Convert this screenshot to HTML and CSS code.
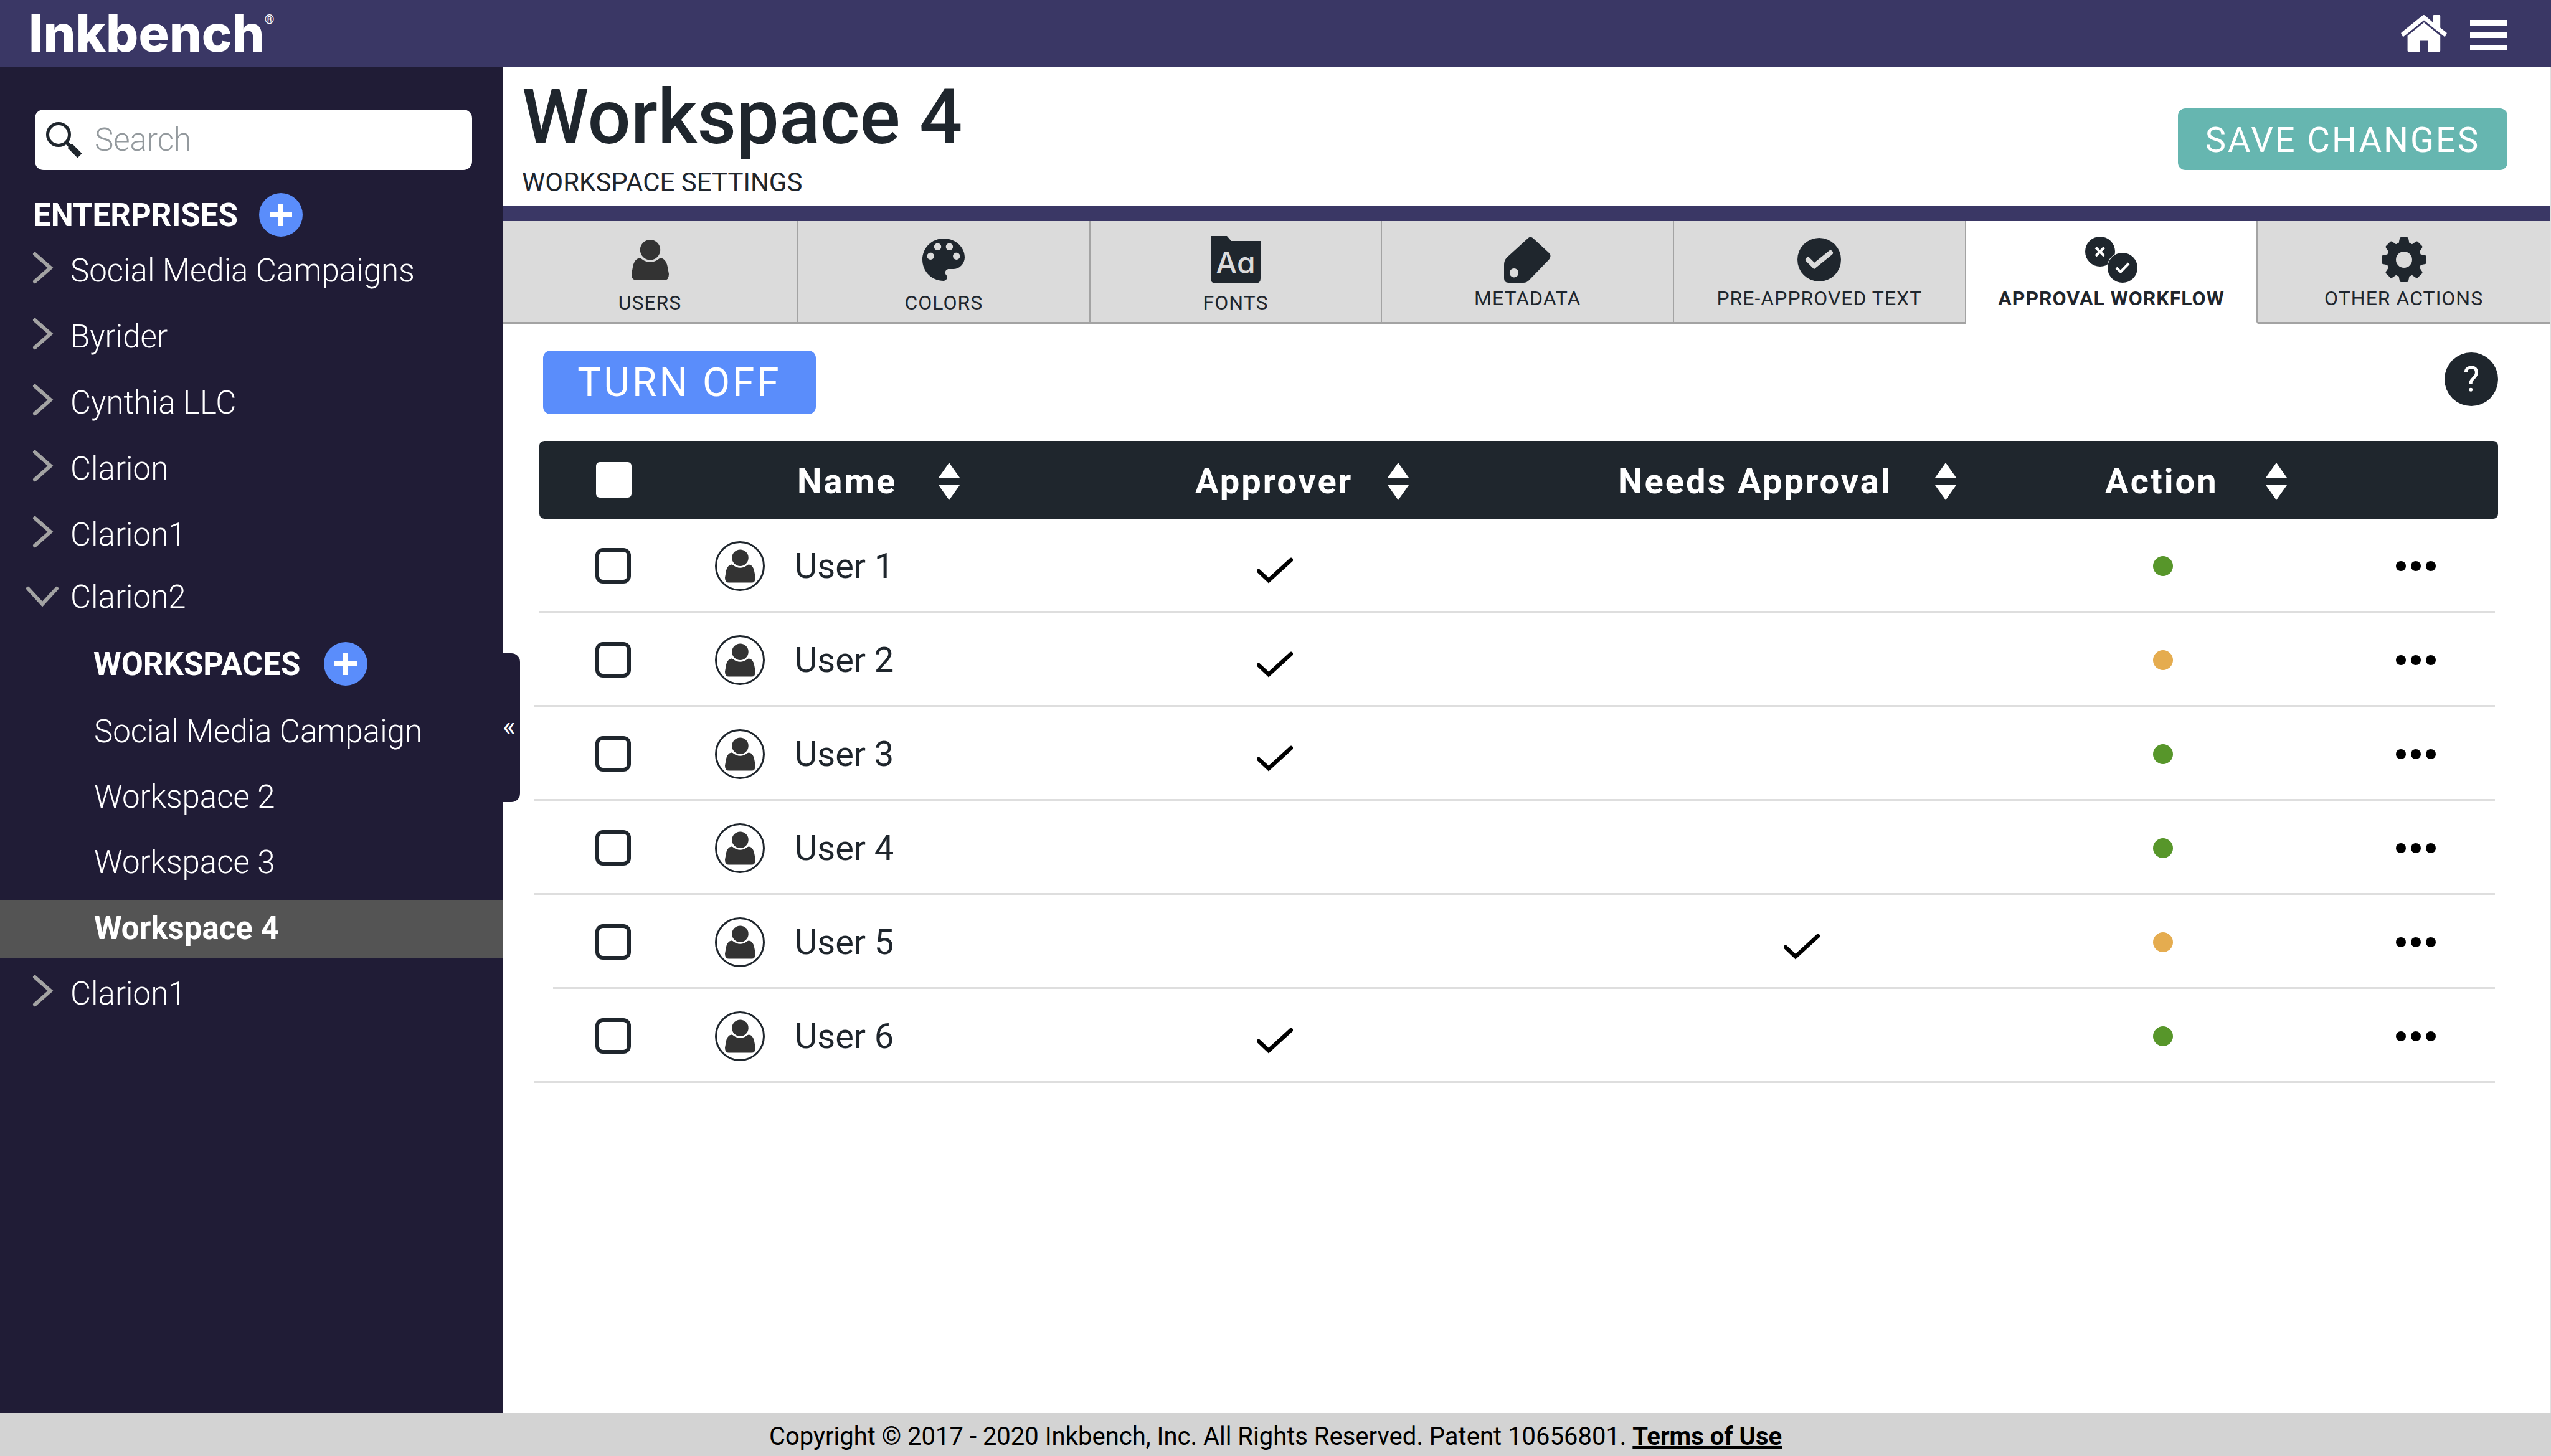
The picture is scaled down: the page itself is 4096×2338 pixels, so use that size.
FILE: index.html
```html
<!DOCTYPE html>
<html lang="en">
<head>
<meta charset="utf-8">
<title>Inkbench - Workspace Settings</title>
<link rel="stylesheet" href="styles.css">
</head>
<body>
<svg class="sprite" aria-hidden="true">
  <symbol id="i-right" viewBox="0 0 52 60"><path d="M14 4 39 26 14 48" fill="none" stroke="#a3a3a3" stroke-width="6" stroke-linecap="round"/></symbol>
  <symbol id="i-down" viewBox="0 0 52 60"><path d="M3 17 26 42 49 17" fill="none" stroke="#a3a3a3" stroke-width="6" stroke-linecap="round"/></symbol>
  <symbol id="i-plus" viewBox="0 0 70 70"><circle cx="35" cy="35" r="35" fill="#5a8dfb"/><path d="M35 17V53M17 35H53" stroke="#fff" stroke-width="8"/></symbol>
  <symbol id="i-user" viewBox="0 0 60 65"><circle cx="30" cy="16.2" r="16.2"/><path d="M13 29.5C17 29.5 19 35.8 30 35.8S43 29.5 47 29.5C54 30 57 38 58 44L60 55Q60 65 52 65H8Q0 65 0 55L2 44C3 38 6 30 13 29.5Z"/></symbol>
  <symbol id="i-avatar" viewBox="0 0 80 80"><circle cx="40" cy="40" r="38.5" fill="#fff" stroke="#1f262d" stroke-width="3"/><use href="#i-user" x="16" y="13" width="49" height="54" fill="#333"/></symbol>
  <symbol id="i-sort" viewBox="0 0 34 60"><path d="M17 0 34 24H0ZM17 60 34 36H0Z" fill="#fff"/></symbol>
  <symbol id="i-check" viewBox="0 0 58 42"><path d="M3 22 19 37 55 4" fill="none" stroke="#000" stroke-width="6.5" stroke-linecap="round"/></symbol>
  <symbol id="i-more" viewBox="0 0 64 16"><circle cx="8" cy="8" r="8"/><circle cx="32" cy="8" r="8"/><circle cx="56" cy="8" r="8"/></symbol>
</svg>

<header class="topbar">
  <a class="logo" href="#">Inkbench<span class="logo-mark">®</span></a>
  <nav class="topbar-nav" aria-label="Main">
    <a href="#" aria-label="Home"><svg width="74" height="60" viewBox="0 0 74 60" fill="#fff"><path d="M34.500 1Q36.600-1 39 1L51.400 12V1.500Q51.400 0 53 0H61.600Q63.200 0 63.200 1.500V20.500L73 28Q74 29 73.600 30L71.500 34Q70.300 35.400 69 34.200L37 8.500 5 34.200Q3.700 35.400 2.400 34L.3 30Q0 29 1 28Z"/><path d="M37 12 63.200 33.500V57.500Q63.200 59.500 61 59.500H43V41.500H30.600V59.500H12.800Q10.600 59.500 10.600 57.500V33.500Z"/></svg></a>
    <button type="button" aria-label="Menu"><svg width="60" height="53" viewBox="0 -4 60 53" fill="#fff"><path d="M0 0H60V9H0ZM0 20H60V29H0ZM0 40H60V49H0Z"/></svg></button>
  </nav>
</header>

<div class="layout">
  <aside class="sidebar">
    <label class="search">
      <svg width="58" height="58" viewBox="0 0 58 58" fill="none" stroke="#1f262d"><circle cx="20" cy="20" r="17.5" stroke-width="5"/><path d="M33 33 40 40" stroke-width="6"/><path d="M38 38 54 54" stroke-width="10"/></svg>
      <input type="search" placeholder="Search" aria-label="Search">
    </label>
    <div class="side-heading">
      <h2>ENTERPRISES</h2>
      <button type="button" aria-label="Add enterprise"><svg width="70" height="70"><use href="#i-plus"/></svg></button>
    </div>
    <ul class="tree">
      <li><a class="node" href="#"><svg width="52" height="60"><use href="#i-right"/></svg>Social Media Campaigns</a></li>
      <li><a class="node" href="#"><svg width="52" height="60"><use href="#i-right"/></svg>Byrider</a></li>
      <li><a class="node" href="#"><svg width="52" height="60"><use href="#i-right"/></svg>Cynthia LLC</a></li>
      <li><a class="node" href="#"><svg width="52" height="60"><use href="#i-right"/></svg>Clarion</a></li>
      <li><a class="node" href="#"><svg width="52" height="60"><use href="#i-right"/></svg>Clarion1</a></li>
      <li>
        <a class="node node-open" href="#"><svg width="52" height="60"><use href="#i-down"/></svg>Clarion2</a>
        <div class="side-heading side-heading-sub">
          <h3>WORKSPACES</h3>
          <button type="button" aria-label="Add workspace"><svg width="70" height="70"><use href="#i-plus"/></svg></button>
        </div>
        <ul class="workspaces">
          <li><a href="#">Social Media Campaign</a></li>
          <li><a href="#">Workspace 2</a></li>
          <li><a href="#">Workspace 3</a></li>
          <li><a class="current" href="#" aria-current="page">Workspace 4</a></li>
        </ul>
      </li>
      <li><a class="node" href="#"><svg width="52" height="60"><use href="#i-right"/></svg>Clarion1</a></li>
    </ul>
    <button class="collapse" type="button" aria-label="Collapse sidebar">«</button>
  </aside>

  <main class="main">
    <div class="page-head">
      <div>
        <h1>Workspace 4</h1>
        <p class="subtitle">WORKSPACE SETTINGS</p>
      </div>
      <button class="save" type="button">SAVE CHANGES</button>
    </div>

    <nav class="tabs" aria-label="Workspace settings">
      <a class="tab tab-tall" href="#"><span class="tab-icon"><svg width="60" height="65" fill="#333"><use href="#i-user"/></svg></span>USERS</a>
      <a class="tab tab-tall" href="#"><span class="tab-icon"><svg width="68" height="68" viewBox="3 3 18 18"><path d="M12 3c-4.970 0-9 4.030-9 9s4.030 9 9 9c.83 0 1.500-.67 1.500-1.500 0-.39-.15-.74-.39-1.010-.23-.26-.38-.61-.38-.99 0-.83.67-1.500 1.500-1.500H16c2.760 0 5-2.240 5-5 0-4.420-4.030-8-9-8zm-5.500 9c-.83 0-1.500-.67-1.500-1.500S5.670 9 6.500 9 8 9.670 8 10.500 7.330 12 6.500 12zm3-4C8.670 8 8 7.330 8 6.500S8.670 5 9.500 5s1.500.67 1.500 1.500S10.330 8 9.500 8zm5 0c-.83 0-1.500-.67-1.500-1.500S13.670 5 14.500 5s1.500.67 1.500 1.500S15.330 8 14.500 8zm3 4c-.83 0-1.500-.67-1.500-1.500S16.670 9 17.500 9s1.500.67 1.500 1.500-.67 1.500-1.500 1.500z"/></svg></span>COLORS</a>
      <a class="tab tab-tall" href="#"><span class="tab-icon"><svg width="80" height="76" viewBox="0 0 80 76"><path d="M0 0H26L33 8H80V68Q80 76 72 76H8Q0 76 0 68Z"/><text class="aa" x="40" y="60" text-anchor="middle">Aa</text></svg></span>FONTS</a>
      <a class="tab" href="#"><span class="tab-icon"><svg width="75" height="74" viewBox="0 0 75 74"><path fill-rule="evenodd" d="M39 2Q42-1 46 2L72 26Q77 31 72 37L41 69Q37 74 31 74H7Q0 74 0 67V45Q0 38 5 33ZM16 51A7.200 7.200 0 1 0 16 65.400A7.200 7.200 0 1 0 16 51Z"/></svg></span>METADATA</a>
      <a class="tab" href="#"><span class="tab-icon"><svg width="70" height="70" viewBox="0 0 70 70"><circle cx="35" cy="35" r="35"/><path d="M17 35 27 45 53 24" fill="none" stroke="#dbdbdb" stroke-width="8" stroke-linecap="round"/></svg></span>PRE-APPROVED TEXT</a>
      <a class="tab tab-active" href="#" aria-current="page"><span class="tab-icon"><svg width="84" height="74" viewBox="0 0 84 74"><circle cx="24" cy="24" r="24"/><circle cx="60" cy="50" r="25" fill="#fff"/><circle cx="60" cy="50" r="24"/><path d="M17 17.500 30.500 31M30.500 17.500 17 31M50 50 57 56.500 70 43" fill="none" stroke="#fff" stroke-width="4"/></svg></span>APPROVAL WORKFLOW</a>
      <a class="tab" href="#"><span class="tab-icon"><svg width="72" height="72" viewBox="-36 -36 72 72"><circle r="20.500" fill="none" stroke="#1f262d" stroke-width="15"/><g id="teeth"><path id="tooth" d="M-9-24-7-34Q-6.500-36-5-36H5Q6.500-36 7-34L9-24Z"/><use href="#tooth" transform="rotate(45)"/><use href="#tooth" transform="rotate(90)"/><use href="#tooth" transform="rotate(135)"/></g><use href="#teeth" transform="rotate(180)"/></svg></span>OTHER ACTIONS</a>
    </nav>

    <section class="content">
      <div class="toolbar">
        <button class="turn-off" type="button">TURN OFF</button>
        <button class="help" type="button" aria-label="Help">?</button>
      </div>

      <table class="users">
        <colgroup><col class="w-select"><col><col class="w-approver"><col class="w-needs"><col class="w-action"><col class="w-more"></colgroup>
        <thead>
          <tr>
            <th><input type="checkbox" aria-label="Select all users"></th>
            <th><button class="sort sort-name" type="button">Name<svg width="34" height="60"><use href="#i-sort"/></svg></button></th>
            <th><button class="sort sort-approver" type="button">Approver<svg width="34" height="60"><use href="#i-sort"/></svg></button></th>
            <th><button class="sort sort-needs" type="button">Needs Approval<svg width="34" height="60"><use href="#i-sort"/></svg></button></th>
            <th><button class="sort sort-action" type="button">Action<svg width="34" height="60"><use href="#i-sort"/></svg></button></th>
            <th></th>
          </tr>
        </thead>
        <tbody>
          <tr class="line-flush">
            <td><input type="checkbox" aria-label="Select User 1"></td>
            <td><div class="person"><svg width="80" height="80"><use href="#i-avatar"/></svg>User 1</div></td>
            <td class="approver"><svg width="58" height="42" role="img" aria-label="Yes"><use href="#i-check"/></svg></td>
            <td class="needs"></td>
            <td class="status"><span class="dot"></span></td>
            <td><button class="more" type="button" aria-label="More for User 1"><svg width="64" height="16"><use href="#i-more"/></svg></button></td>
          </tr>
          <tr>
            <td><input type="checkbox" aria-label="Select User 2"></td>
            <td><div class="person"><svg width="80" height="80"><use href="#i-avatar"/></svg>User 2</div></td>
            <td class="approver"><svg width="58" height="42" role="img" aria-label="Yes"><use href="#i-check"/></svg></td>
            <td class="needs"></td>
            <td class="status"><span class="dot dot-pending"></span></td>
            <td><button class="more" type="button" aria-label="More for User 2"><svg width="64" height="16"><use href="#i-more"/></svg></button></td>
          </tr>
          <tr>
            <td><input type="checkbox" aria-label="Select User 3"></td>
            <td><div class="person"><svg width="80" height="80"><use href="#i-avatar"/></svg>User 3</div></td>
            <td class="approver"><svg width="58" height="42" role="img" aria-label="Yes"><use href="#i-check"/></svg></td>
            <td class="needs"></td>
            <td class="status"><span class="dot"></span></td>
            <td><button class="more" type="button" aria-label="More for User 3"><svg width="64" height="16"><use href="#i-more"/></svg></button></td>
          </tr>
          <tr>
            <td><input type="checkbox" aria-label="Select User 4"></td>
            <td><div class="person"><svg width="80" height="80"><use href="#i-avatar"/></svg>User 4</div></td>
            <td class="approver"></td>
            <td class="needs"></td>
            <td class="status"><span class="dot"></span></td>
            <td><button class="more" type="button" aria-label="More for User 4"><svg width="64" height="16"><use href="#i-more"/></svg></button></td>
          </tr>
          <tr class="line-inset">
            <td><input type="checkbox" aria-label="Select User 5"></td>
            <td><div class="person"><svg width="80" height="80"><use href="#i-avatar"/></svg>User 5</div></td>
            <td class="approver"></td>
            <td class="needs"><svg width="58" height="42" role="img" aria-label="Yes"><use href="#i-check"/></svg></td>
            <td class="status"><span class="dot dot-pending"></span></td>
            <td><button class="more" type="button" aria-label="More for User 5"><svg width="64" height="16"><use href="#i-more"/></svg></button></td>
          </tr>
          <tr>
            <td><input type="checkbox" aria-label="Select User 6"></td>
            <td><div class="person"><svg width="80" height="80"><use href="#i-avatar"/></svg>User 6</div></td>
            <td class="approver"><svg width="58" height="42" role="img" aria-label="Yes"><use href="#i-check"/></svg></td>
            <td class="needs"></td>
            <td class="status"><span class="dot"></span></td>
            <td><button class="more" type="button" aria-label="More for User 6"><svg width="64" height="16"><use href="#i-more"/></svg></button></td>
          </tr>
        </tbody>
      </table>
    </section>
  </main>
</div>

<footer class="footer">Copyright © 2017 - 2020 Inkbench, Inc. All Rights Reserved. Patent 10656801. <a href="#">Terms of Use</a></footer>
</body>
</html>
```

FILE: styles.css
```css
:root {
  --purple: #3a3765;
  --night: #201c36;
  --ink: #1f262d;
  --blue: #5a8dfb;
  --teal: #66b6b0;
  --grey: #a3a3a3;
}

* {
  box-sizing: border-box;
}

body {
  margin: 0;
  min-height: 100vh;
  display: flex;
  flex-direction: column;
  font-family: Roboto, "Liberation Sans", sans-serif;
  color: var(--ink);
  background: #fff;
}

h1, h2, h3, p, ul {
  margin: 0;
  padding: 0;
}

ul {
  list-style: none;
}

a {
  color: inherit;
  text-decoration: none;
}

button {
  margin: 0;
  padding: 0;
  border: 0;
  background: none;
  color: inherit;
  font: inherit;
  cursor: pointer;
}

svg {
  display: block;
  flex: none;
}

.sprite {
  position: absolute;
  width: 0;
  height: 0;
}

/* Top bar */
.topbar {
  display: flex;
  justify-content: space-between;
  align-items: center;
  height: 108px;
  padding: 0 70px 0 46px;
  background: var(--purple);
  color: #fff;
}

.logo {
  display: flex;
  font: 800 82px/82px Inter, sans-serif;
}

.logo-mark {
  font: 700 20px/20px Roboto, sans-serif;
  padding-top: 8px;
}

.topbar-nav {
  display: flex;
  align-items: center;
  gap: 37px;
}

/* Sidebar */
.layout {
  flex: 1;
  display: flex;
}

.sidebar {
  position: relative;
  flex: none;
  width: 807px;
  padding-top: 68px;
  background: var(--night);
  color: #fff;
  font-size: 51px;
  font-weight: 300;
}

.search {
  display: flex;
  align-items: center;
  gap: 20px;
  height: 97px;
  margin: 0 49px 0 56px;
  padding: 0 18px;
  border-radius: 14px;
  background: #fff;
}

.search input {
  flex: 1;
  min-width: 0;
  padding: 0;
  border: 0;
  outline: 0;
  background: none;
  color: var(--ink);
  font: inherit;
}

.search input::placeholder {
  color: #949a9e;
}

.side-heading {
  display: flex;
  align-items: center;
  gap: 34px;
  height: 72px;
  margin: 36px 0 0;
  padding-left: 53px;
}

.side-heading h2,
.side-heading h3 {
  font-size: 51px;
  font-weight: 700;
}

.side-heading-sub {
  gap: 38px;
  height: 117px;
  margin: 0;
  padding: 5px 0 0 150px;
}

.node {
  display: flex;
  align-items: center;
  gap: 19px;
  height: 106px;
  padding-left: 42px;
}

.node-open {
  height: 94px;
}

.workspaces a {
  display: flex;
  align-items: center;
  height: 105px;
  padding-left: 151px;
}

.workspaces .current {
  border: solid transparent;
  border-width: 8px 0 3px;
  padding-bottom: 4px;
  background: #545454 padding-box;
  font-weight: 700;
}

.collapse {
  position: absolute;
  top: 941px;
  left: 100%;
  width: 28px;
  height: 239px;
  padding: 0 8px 6px 0;
  border-radius: 0 14px 14px 0;
  background: var(--night);
  font-size: 44px;
  font-weight: 400;
}

/* Page head and tabs */
.main {
  flex: 1;
  min-width: 0;
  border-right: 2px solid #e0e0e0;
}

.page-head {
  display: flex;
  justify-content: space-between;
  align-items: center;
  height: 222px;
  padding: 20px 68px 16px 31px;
}

h1 {
  font-size: 122px;
  line-height: 122px;
  font-weight: 500;
}

.subtitle {
  margin-top: 22px;
  font-size: 42px;
  line-height: 42px;
}

.save {
  width: 529px;
  height: 99px;
  margin-top: 4px;
  padding-top: 3px;
  border-radius: 12px;
  background: var(--teal);
  color: #fff;
  font-size: 56px;
  letter-spacing: 3px;
}

.tabs {
  display: grid;
  grid-template-columns: 475px repeat(6, 1fr);
  border-top: 25px solid var(--purple);
}

.tab {
  display: flex;
  flex-direction: column;
  align-items: center;
  height: 165px;
  padding-top: 24px;
  border-right: 2px solid var(--grey);
  border-bottom: 3px solid var(--grey);
  background: #dbdbdb;
  font-size: 32px;
  line-height: 36px;
  letter-spacing: 1px;
  white-space: nowrap;
}

.tab:last-child {
  border-right: 0;
}

.tab-icon {
  display: flex;
  align-items: center;
  height: 76px;
  margin-bottom: 6px;
  fill: var(--ink);
}

.tab-icon svg:not([fill]) {
  fill: var(--ink);
}

.tab-icon .aa {
  fill: #dbdbdb;
  font: 500 48px Inter, sans-serif;
  font-feature-settings: "cv11";
  letter-spacing: 0;
}

.tab-tall .tab-icon {
  margin-bottom: 13px;
}

.tab-active {
  border-bottom-color: #fff;
  background: #fff;
  font-weight: 700;
}

/* Content */
.content {
  padding: 43px 83px 43px 50px;
}

.toolbar {
  display: flex;
  justify-content: space-between;
  align-items: flex-start;
  margin: 0 0 43px 15px;
}

.turn-off {
  width: 438px;
  height: 102px;
  border-radius: 12px;
  background: var(--blue);
  color: #fff;
  font-size: 64px;
  letter-spacing: 4px;
}

.help {
  width: 86px;
  height: 86px;
  margin-top: 3px;
  border-radius: 50%;
  background: var(--ink);
  color: #fff;
  font-size: 56px;
}

.users {
  width: 100%;
  table-layout: fixed;
  border-spacing: 0;
  font-size: 56px;
}

.w-select { width: 291px; }
.w-approver { width: 680px; }
.w-needs { width: 784px; }
.w-action { width: 464px; }
.w-more { width: 167px; }

.users th,
.users td {
  padding: 0;
  text-align: left;
}

.users th {
  height: 125px;
  background: var(--ink) padding-box;
  color: #fff;
}

.users th:first-child {
  border-left: 9px solid transparent;
  border-radius: 17px 0 0 17px / 8px 0 0 8px;
}

.users th:last-child {
  border-radius: 0 8px 8px 0;
}

.users input {
  appearance: none;
  display: block;
  width: 57px;
  height: 57px;
  margin: 0 0 0 99px;
  border: 6px solid var(--ink);
  border-radius: 12px;
  background: #fff;
}

.users th input {
  margin-left: 91px;
  border: 0;
  border-radius: 6px;
}

.sort {
  display: flex;
  align-items: center;
  padding-top: 5px;
  font-weight: 700;
  letter-spacing: 3px;
}

.sort-name { gap: 67px; padding-left: 132px; }
.sort-approver { gap: 56px; padding-left: 3px; }
.sort-needs { gap: 69px; padding-left: 2px; }
.sort-action { gap: 76px; }

.users tbody tr {
  height: 151px;
  background: linear-gradient(#dedede, #dedede) 0 100% / calc(100% - 5px) 3px no-repeat;
}

.users .line-flush {
  background-position: 9px 100%;
  background-size: calc(100% - 14px) 3px;
}

.users .line-inset {
  background-position: 31px 100%;
  background-size: calc(100% - 36px) 3px;
}

.person {
  display: flex;
  align-items: center;
  gap: 48px;
}

.users .approver {
  padding: 14px 0 0 102px;
}

.users .needs {
  padding: 14px 0 0 268px;
}

.users .status {
  padding-left: 77px;
}

.dot {
  display: block;
  width: 32px;
  height: 32px;
  border-radius: 50%;
  background: #57962a;
}

.dot-pending {
  background: #e5ac4f;
}

.more {
  display: block;
  padding: 20px 3px;
}

/* Footer */
.footer {
  height: 69px;
  padding-top: 6px;
  background: #d3d3d3;
  color: #000;
  font-size: 40px;
  line-height: 63px;
  text-align: center;
}

.footer a {
  font-weight: 700;
  text-decoration: underline;
}
```
